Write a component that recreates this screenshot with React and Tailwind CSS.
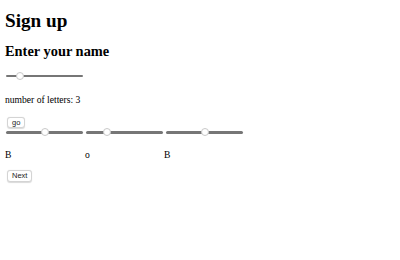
import React from "react";

function Slider({ pos }) {
  return (
    <div className="relative h-[12px] w-[77px]">
      <div className="absolute left-0 right-0 top-[5px] h-[2.5px] rounded-full bg-[#767676]" />
      <div
        className="absolute top-[2px] h-[8px] w-[8px] rounded-full border border-[#c8c8c8] bg-white"
        style={{ left: pos - 4 }}
      />
    </div>
  );
}

function Btn({ children }) {
  return (
    <button className="rounded-[3px] border border-[#d4d4d4] bg-white px-[4px] py-[1px] text-[7.5px] leading-[7.5px] text-[#222] shadow-[0_0.5px_1px_rgba(0,0,0,0.15)] [font-family:'Liberation_Sans',Arial,sans-serif]">
      {children}
    </button>
  );
}

export default function App() {
  return (
    <div className="min-h-[260px] bg-white px-[5px] pt-[9.5px] text-black [font-family:'Liberation_Serif','Times_New_Roman',serif]">
      <h1 className="text-[19.2px] font-bold leading-[22px]">Sign up</h1>
      <h2 className="mt-[11.3px] text-[14.4px] font-bold leading-[16.5px]">Enter your name</h2>
      <div className="mt-[10.5px] pl-[1px]">
        <Slider pos={14} />
      </div>
      <p className="mt-[12px] text-[9.6px] leading-[11px]">number of letters: 3</p>
      <div className="mt-[12px] flex pl-[2px]">
        <Btn>go</Btn>
      </div>
      <div className="mt-[-2px] flex gap-[3px] pl-[1px]">
        {[
          { pos: 39, l: "B" },
          { pos: 21, l: "o" },
          { pos: 39, l: "B" },
        ].map((c, i) => (
          <div key={i} className="w-[77px]">
            <Slider pos={c.pos} />
          </div>
        ))}
      </div>
      <div className="mt-[11px] flex text-[9.6px] leading-[11px]">
        <div className="w-[80px]">B</div>
        <div className="w-[79px]">o</div>
        <div className="w-[79px]">B</div>
      </div>
      <div className="mt-[10px] flex pl-[2px]">
        <Btn>Next</Btn>
      </div>
    </div>
  );
}
